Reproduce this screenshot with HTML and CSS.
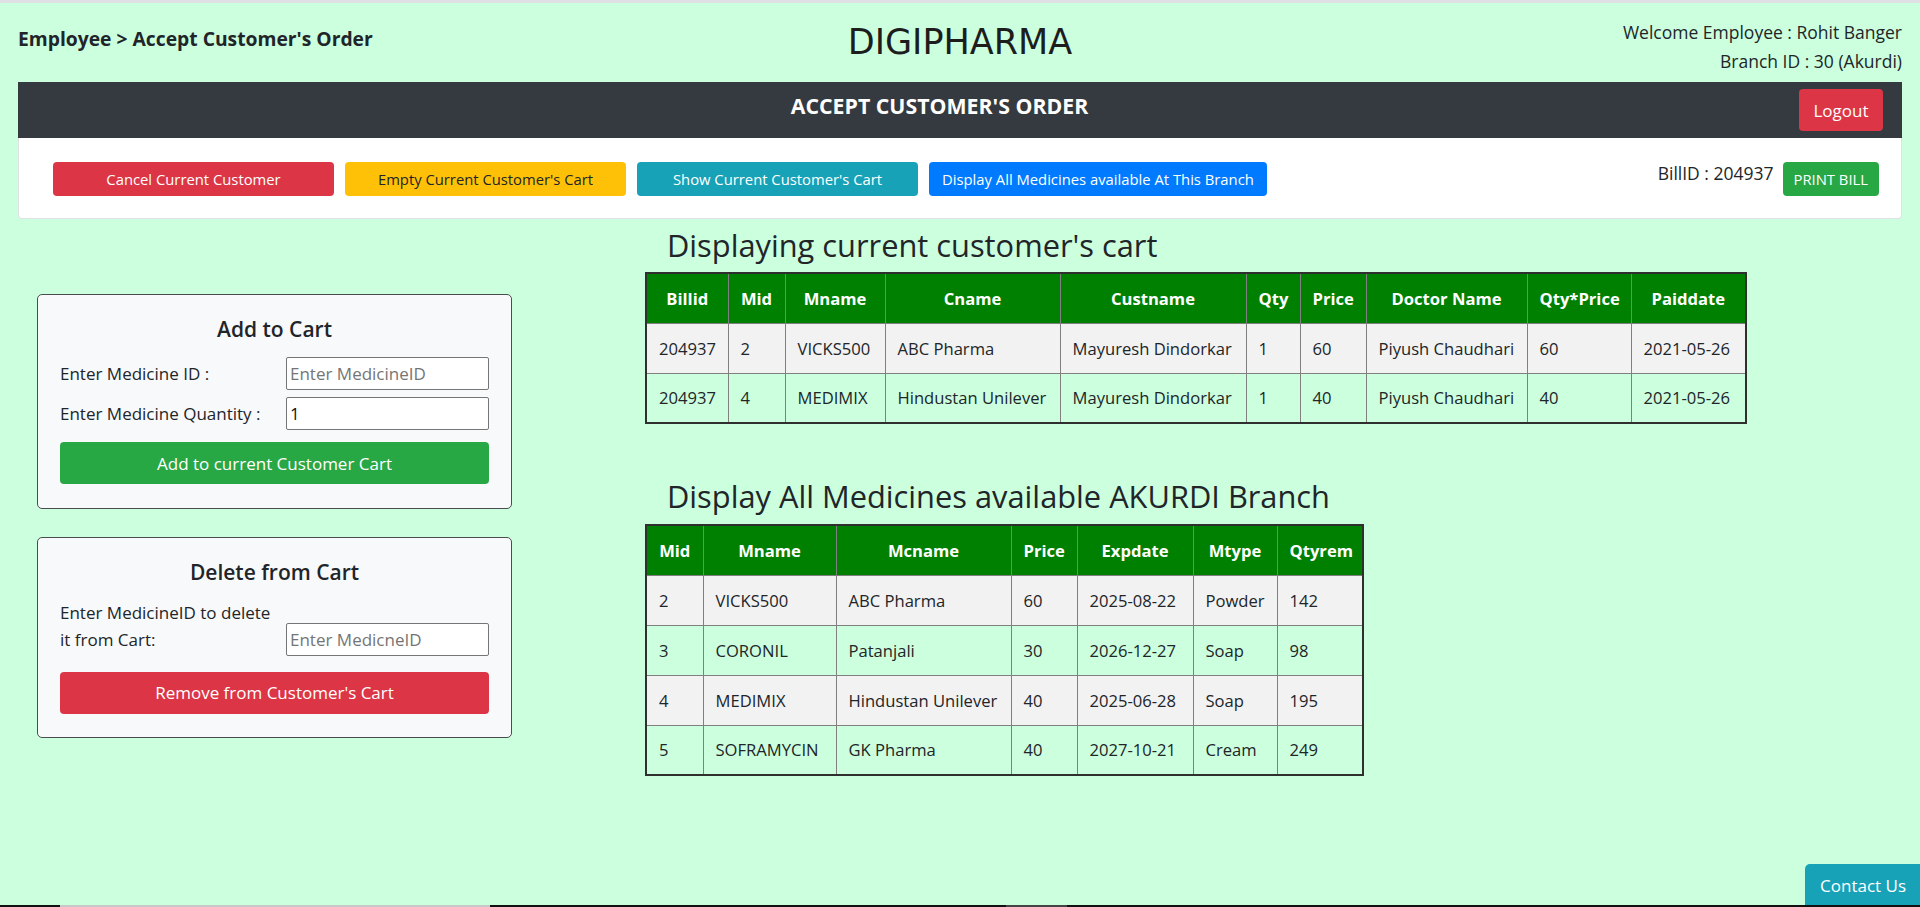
FILE: index.html
```html
<!DOCTYPE html>
<html lang="en">
<head>
<meta charset="utf-8">
<title>DIGIPHARMA - Accept Customer's Order</title>
<link rel="stylesheet" href="styles.css">
</head>
<body>
<header class="topbar">
  <div class="crumb">Employee &gt; Accept Customer's Order</div>
  <div class="brand">DIGIPHARMA</div>
  <div class="who">
    <div>Welcome Employee : Rohit Banger</div>
    <div>Branch ID : 30 (Akurdi)</div>
  </div>
</header>

<div class="titlebar">
  <div class="title">ACCEPT CUSTOMER'S ORDER</div>
  <button class="logout">Logout</button>
</div>

<div class="actions">
  <div class="action-group">
    <button class="btn btn-fixed btn-red">Cancel Current Customer</button>
    <button class="btn btn-fixed btn-yellow">Empty Current Customer's Cart</button>
    <button class="btn btn-fixed btn-teal">Show Current Customer's Cart</button>
    <button class="btn btn-blue">Display All Medicines available At This Branch</button>
  </div>
  <div class="bill-group">
    <span class="billid">BillID : 204937</span>
    <button class="btn btn-green btn-print">PRINT BILL</button>
  </div>
</div>

<main class="content">
  <aside class="forms">
    <section class="card">
      <h4 class="card-title">Add to Cart</h4>
      <div class="form-row">
        <label class="form-label">Enter Medicine ID :</label>
        <input class="form-input" type="text" placeholder="Enter MedicineID">
      </div>
      <div class="form-row">
        <label class="form-label">Enter Medicine Quantity :</label>
        <input class="form-input" type="text" value="1">
      </div>
      <button class="wide-btn btn-green">Add to current Customer Cart</button>
    </section>

    <section class="card card-second">
      <h4 class="card-title">Delete from Cart</h4>
      <div class="form-row">
        <label class="form-label">Enter MedicineID to delete it from Cart:</label>
        <input class="form-input" type="text" placeholder="Enter MedicneID">
      </div>
      <button class="wide-btn btn-red wide-btn-spaced">Remove from Customer's Cart</button>
    </section>
  </aside>

  <div class="tables">
    <h3 class="section-title">Displaying current customer's cart</h3>
    <table class="grid cart-table">
      <thead>
        <tr><th>Billid</th><th>Mid</th><th>Mname</th><th>Cname</th><th>Custname</th><th>Qty</th><th>Price</th><th>Doctor Name</th><th>Qty*Price</th><th>Paiddate</th></tr>
      </thead>
      <tbody>
        <tr><td>204937</td><td>2</td><td>VICKS500</td><td>ABC Pharma</td><td>Mayuresh Dindorkar</td><td>1</td><td>60</td><td>Piyush Chaudhari</td><td>60</td><td>2021-05-26</td></tr>
        <tr><td>204937</td><td>4</td><td>MEDIMIX</td><td>Hindustan Unilever</td><td>Mayuresh Dindorkar</td><td>1</td><td>40</td><td>Piyush Chaudhari</td><td>40</td><td>2021-05-26</td></tr>
      </tbody>
    </table>

    <h3 class="section-title section-title-second">Display All Medicines available AKURDI Branch</h3>
    <table class="grid med-table">
      <thead>
        <tr><th>Mid</th><th>Mname</th><th>Mcname</th><th>Price</th><th>Expdate</th><th>Mtype</th><th>Qtyrem</th></tr>
      </thead>
      <tbody>
        <tr><td>2</td><td>VICKS500</td><td>ABC Pharma</td><td>60</td><td>2025-08-22</td><td>Powder</td><td>142</td></tr>
        <tr><td>3</td><td>CORONIL</td><td>Patanjali</td><td>30</td><td>2026-12-27</td><td>Soap</td><td>98</td></tr>
        <tr><td>4</td><td>MEDIMIX</td><td>Hindustan Unilever</td><td>40</td><td>2025-06-28</td><td>Soap</td><td>195</td></tr>
        <tr><td>5</td><td>SOFRAMYCIN</td><td>GK Pharma</td><td>40</td><td>2027-10-21</td><td>Cream</td><td>249</td></tr>
      </tbody>
    </table>
  </div>
</main>

<button class="contact">Contact Us</button>

<div class="bottom-strip">
  <span class="seg seg-light"></span>
  <span class="seg seg-dark"></span>
</div>
</body>
</html>
```
FILE: styles.css
```css
* { box-sizing: border-box; }

html, body { margin: 0; padding: 0; }

body {
  background: #ccffdd;
  border-top: 3px solid #dfe0e6;
  font-family: "Open Sans", "Noto Sans", sans-serif;
  font-size: 17px;
  color: #212529;
}

button { font-family: inherit; cursor: pointer; }

/* ---------- top header ---------- */
.topbar {
  display: grid;
  grid-template-columns: 1fr auto 1fr;
  align-items: start;
  height: 79px;
  padding: 0 18px;
}
.crumb {
  margin-top: 24px;
  font-size: 19.3px;
  font-weight: 700;
  line-height: 1.2;
}
.brand {
  margin-top: 19px;
  font-family: "DejaVu Sans", sans-serif;
  font-size: 35px;
  line-height: 41px;
  color: #1d1d1d;
}
.who {
  margin-top: 15px;
  text-align: right;
  font-size: 17.5px;
  line-height: 29px;
}

/* ---------- dark title bar ---------- */
.titlebar {
  position: relative;
  margin: 0 18px;
  height: 56px;
  background: #343a40;
  color: #fff;
}
.title {
  padding: 11px 41px 0 0;
  text-align: center;
  font-size: 21.3px;
  font-weight: 700;
  line-height: 1.2;
}
.logout {
  position: absolute;
  top: 7px;
  right: 19px;
  height: 42px;
  padding: 0 14.5px;
  border: 0;
  border-radius: 4px;
  background: #dc3545;
  color: #fff;
  font-size: 17px;
}

/* ---------- action panel ---------- */
.actions {
  display: flex;
  justify-content: space-between;
  align-items: flex-start;
  margin: 0 18px;
  height: 81px;
  padding: 24px 22px 0 34px;
  background: #fff;
  border: 1px solid #dee2e6;
  border-top: 0;
  border-radius: 0 0 4px 4px;
}
.action-group { display: flex; gap: 11px; }
.bill-group { display: flex; align-items: flex-start; gap: 9px; }
.billid {
  margin-top: -2px;
  font-size: 17.5px;
  line-height: 26px;
}

.btn {
  height: 34px;
  padding: 0 12px;
  border: 1px solid transparent;
  border-radius: 4px;
  font-size: 14.8px;
  line-height: 22px;
  color: #fff;
  text-align: center;
  white-space: nowrap;
}
.btn-fixed { width: 281px; }
.btn-print { padding: 0 10px; }

.btn-red { background: #dc3545; color: #fff; }
.btn-yellow { background: #ffc107; color: #212529; }
.btn-teal { background: #17a2b8; color: #fff; }
.btn-blue { background: #007bff; color: #fff; }
.btn-green { background: #28a745; color: #fff; }

/* ---------- main content ---------- */
.content {
  display: flex;
  align-items: flex-start;
  padding-left: 37px;
}

.forms {
  width: 475px;
  margin-top: 75px;
}

.card {
  background: #f8f9fa;
  border: 1px solid #4a4d50;
  border-radius: 5px;
  padding: 22px 22px 24px;
}
.card-second { margin-top: 28px; padding-bottom: 23px; }

.card-title {
  margin: 0 0 15px;
  text-align: center;
  font-size: 21px;
  font-weight: 600;
  line-height: 1.2;
}

.form-row {
  display: grid;
  grid-template-columns: 212px 203px;
  column-gap: 14px;
  align-items: last baseline;
  margin-bottom: 7px;
}
.form-label {
  font-size: 17px;
  line-height: 26.5px;
}
.form-input {
  height: 33px;
  padding: 4px 3px;
  border: 1px solid #767676;
  border-radius: 2px;
  background: #fff;
  font-family: inherit;
  font-size: 17px;
  color: #111;
}
.form-input::placeholder { color: #757575; }

.wide-btn {
  display: block;
  width: 100%;
  height: 42px;
  margin-top: 12px;
  border: 0;
  border-radius: 4px;
  font-size: 17px;
}
.wide-btn-spaced { margin-top: 16px; }

/* ---------- tables ---------- */
.tables {
  margin-left: 133px;
  margin-top: 8px;
}
.section-title {
  margin: 0 0 9px 22px;
  font-size: 30.8px;
  font-weight: 500;
  line-height: 36px;
}
.section-title-second { margin-top: 54px; margin-bottom: 10px; }

.grid {
  border-collapse: collapse;
  table-layout: fixed;
  border: 2px solid #2f2f2f;
  font-size: 16.6px;
}
.grid th, .grid td {
  height: 50px;
  padding: 0 12px;
  border: 1px solid #808080;
  line-height: 25px;
  white-space: nowrap;
}
.grid th {
  background: #008000;
  color: #fff;
  font-weight: 700;
  text-align: center;
}
.grid td { text-align: left; }
.grid tbody tr:nth-child(odd) td { background: #f2f2f2; }

.cart-table { width: 1100px; }
.cart-table th:nth-child(1) { width: 82px; }
.cart-table th:nth-child(2) { width: 57px; }
.cart-table th:nth-child(3) { width: 100px; }
.cart-table th:nth-child(4) { width: 175px; }
.cart-table th:nth-child(5) { width: 186px; }
.cart-table th:nth-child(6) { width: 54px; }
.cart-table th:nth-child(7) { width: 66px; }
.cart-table th:nth-child(8) { width: 161px; }
.cart-table th:nth-child(9) { width: 104px; }
.cart-table th:nth-child(10) { width: 115px; }

.med-table { width: 717px; }
.med-table th:nth-child(1) { width: 57px; }
.med-table th:nth-child(2) { width: 133px; }
.med-table th:nth-child(3) { width: 175px; }
.med-table th:nth-child(4) { width: 66px; }
.med-table th:nth-child(5) { width: 116px; }
.med-table th:nth-child(6) { width: 84px; }
.med-table th:nth-child(7) { width: 86px; }

/* ---------- floating bits ---------- */
.contact {
  position: fixed;
  right: 0;
  bottom: 0;
  height: 43px;
  padding: 0 14px 0 15px;
  border: 0;
  border-radius: 5px 0 0 0;
  background: #17a2b8;
  color: #fff;
  font-size: 17px;
}

.bottom-strip {
  position: fixed;
  left: 0;
  right: 0;
  bottom: 0;
  height: 2px;
  display: flex;
  background: #111;
  z-index: 2;
}
.seg { display: block; height: 100%; }
.seg-light { margin-left: 60px; width: 430px; background: #c8c8c8; }
.seg-dark { margin-left: 516px; width: 61px; background: #444; }
```
